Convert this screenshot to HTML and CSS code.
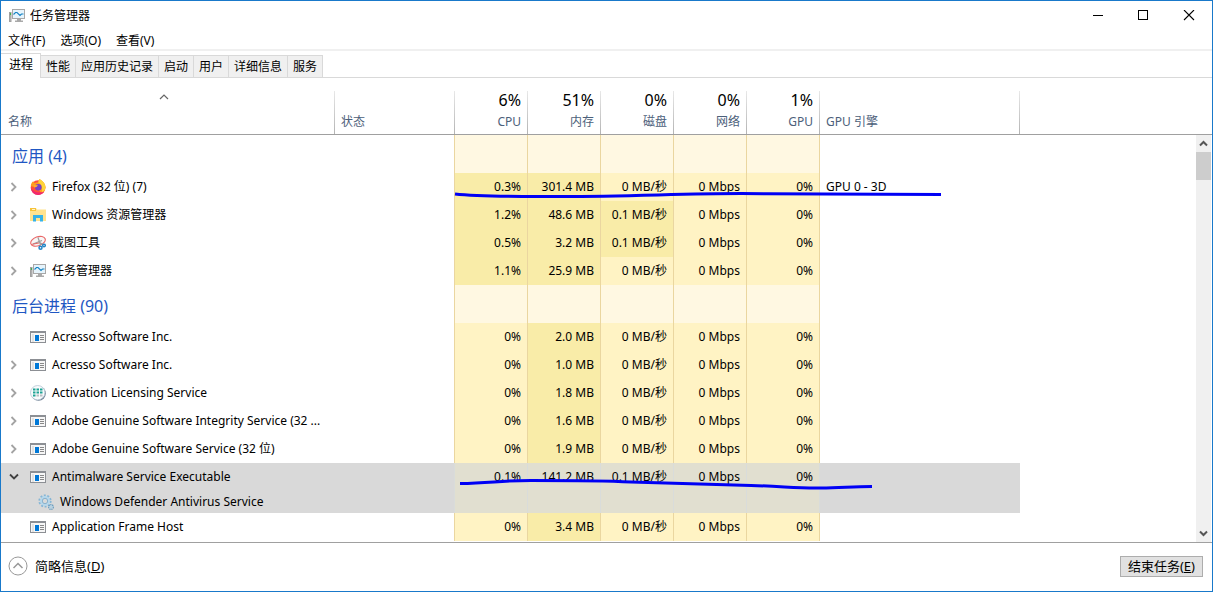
FILE: index.html
```html
<!DOCTYPE html>
<html lang="zh-CN">
<head>
<meta charset="utf-8">
<title>任务管理器</title>
<link rel="stylesheet" href="styles.css">
</head>
<body>
<svg class="defs" aria-hidden="true">
  <symbol id="monitor" viewBox="0 0 16 16">
    <rect x="0.5" y="4.500" width="1.500" height="9" fill="#b8b8b8" stroke="#a0a0a0"/>
    <rect x="1" y="5" width="1" height="2" fill="#3cb44a"/>
    <rect x="3.500" y="1.500" width="12" height="9" fill="#e6f4fc" stroke="#a8a8a8"/>
    <path d="M4.500 6.500L6.500 4.500L8 4.500L11 7.500L12.500 6L14.500 6" fill="none" stroke="#1683c4" stroke-width="1.100"/>
    <path d="M8 11h4v1.500h2V14H6v-1.500h2z" fill="#a9a9a9"/>
  </symbol>
  <symbol id="firefox" viewBox="0 0 16 16">
    <circle cx="8" cy="8.6" r="7.3" fill="#ff4f3c"/>
    <path d="M.8 7C1 4.500 2 3.300 3.200 2.200L4.200 4L8 3.300L9.500 0C12.500 2 15.500 4.500 15.500 8.500C15.500 11 14 13.500 12 14.500L7 9z" fill="#ff9d1e"/>
    <path d="M9.500 0C13.500 2.500 15.700 5 15.300 9C15 11 13.500 12.500 12 13C12.500 9 12 5.500 8.300 3.500C8.500 2 9 1 9.500 0z" fill="#ffd43a"/>
    <path d="M.8 9C1.500 13 4 15.900 8 15.900C11 15.900 13 14.700 14.300 12.500C10 14.500 4 13.500.8 9z" fill="#f0286f"/>
    <circle cx="8.300" cy="8.200" r="3.300" fill="#7542c8"/>
    <path d="M3.500 6L8 6.300L6.500 8L4.500 8.500z" fill="#ffb02a"/>
  </symbol>
  <symbol id="folder" viewBox="0 0 16 16">
    <path d="M0 1h6l1 1.500h9V14H0z" fill="#ffe38f"/>
    <path d="M0 1h6v3H0z" fill="#f6c339"/>
    <path d="M2 2h3v1H2z" fill="#fff4cf"/>
    <path d="M3 14.500V8h10v6.500h-3V11H6v3.500z" fill="#35b2e8"/>
  </symbol>
  <symbol id="snip" viewBox="0 0 16 16">
    <ellipse cx="8" cy="6.300" rx="7.600" ry="4.500" transform="rotate(-20 8 6.300)" fill="#f6f6f6" stroke="#e96767" stroke-width="1.100"/>
    <path d="M3 9L12 5.500M8 2.500L10.500 10M8 6.500L13 9.500" fill="none" stroke="#9d9d9d" stroke-width="1.200"/>
    <path d="M1 9.500L9 8" stroke="#e96767"/>
    <circle cx="10.500" cy="12.800" r="1.500" fill="none" stroke="#2285c6" stroke-width="1.500"/>
    <circle cx="14" cy="10.500" r="1.300" fill="none" stroke="#2285c6" stroke-width="1.500"/>
  </symbol>
  <symbol id="app" viewBox="0 0 16 16">
    <rect x="0.500" y="2.500" width="15" height="11" fill="#f6f6f6" stroke="#8c8f94"/>
    <rect y="2" width="16" height="2" fill="#8c8f94"/>
    <rect x="2" y="5" width="2" height="8" fill="#e2e2e2"/>
    <rect x="5" y="6" width="4" height="6" fill="#0078d7"/>
    <path d="M10 6.500h4M10 8.500h4M10 10.500h4" stroke="#888"/>
  </symbol>
  <symbol id="licence" viewBox="0 0 16 16">
    <circle cx="8.500" cy="8.500" r="7.300" fill="#6f7f92"/>
    <circle cx="7.700" cy="7.700" r="7.200" fill="#f8fbfc" stroke="#b5c6d6" stroke-width=".8"/>
    <path d="M3 4.500h2.500M6.500 4.500H9M10 4.500h2.500M3 7.500h2.500M6.500 7.500H9M10 7.500h2.500M3 10.500h2.500" stroke="#1da294" stroke-width="2"/>
    <path d="M6.500 10.500H9M10 10.500h2.500" stroke="#b9bec2" stroke-width="2"/>
  </symbol>
  <symbol id="gears" viewBox="0 0 16 16">
    <circle cx="7" cy="7" r="5.600" fill="none" stroke="#86b6d6" stroke-width="2" stroke-dasharray="2 1.500"/>
    <circle cx="7" cy="7" r="3.900" fill="#d9d9d9" stroke="#b4d7ec" stroke-width="2"/>
    <circle cx="7" cy="7" r="2.700" fill="none" stroke="#76a7c8" stroke-width=".8"/>
    <circle cx="13" cy="13" r="2.300" fill="none" stroke="#6f9fc0" stroke-width="1.500" stroke-dasharray="1.200 .6"/>
    <circle cx="13" cy="13" r="1.300" fill="none" stroke="#a9cfe5"/>
  </symbol>
  <symbol id="right" viewBox="0 0 8 10"><path d="M1.500 1L5.500 5L1.500 9" fill="none" stroke="#a3a3a3" stroke-width="1.800"/></symbol>
  <symbol id="down" viewBox="0 0 10 8"><path d="M1 1.500L5 5.500L9 1.500" fill="none" stroke="#404040" stroke-width="1.800"/></symbol>
</svg>
<div class="window">
  <header class="titlebar">
    <svg class="icon"><use href="#monitor"/></svg>
    <h1 class="title">任务管理器</h1>
    <div class="controls">
      <button type="button" aria-label="最小化"><svg viewBox="0 0 12 12"><path d="M2 5.500h10" stroke="#000"/></svg></button>
      <button type="button" aria-label="最大化"><svg viewBox="0 0 12 12"><rect x="1.500" y="0.500" width="9" height="9" fill="none" stroke="#000"/></svg></button>
      <button type="button" aria-label="关闭"><svg viewBox="0 0 12 12"><path d="M1 0L11 10M11 0L1 10" stroke="#000" stroke-width="1.100"/></svg></button>
    </div>
  </header>
  <nav class="menubar">
    <button type="button">文件(F)</button>
    <button type="button">选项(O)</button>
    <button type="button">查看(V)</button>
  </nav>
  <div class="tabs" role="tablist">
    <button type="button" role="tab" class="tab active" aria-selected="true">进程</button>
    <button type="button" role="tab" class="tab">性能</button>
    <button type="button" role="tab" class="tab">应用历史记录</button>
    <button type="button" role="tab" class="tab">启动</button>
    <button type="button" role="tab" class="tab">用户</button>
    <button type="button" role="tab" class="tab">详细信息</button>
    <button type="button" role="tab" class="tab">服务</button>
  </div>
  <table class="grid head">
    <colgroup><col class="c-name"><col class="c-status"><col class="c-num"><col class="c-num"><col class="c-num"><col class="c-num"><col class="c-num"><col class="c-engine"><col></colgroup>
    <thead>
      <tr>
        <th><div class="hcell"><svg class="sort" viewBox="0 0 10 6"><path d="M1 5L5 1L9 5" fill="none" stroke="#666" stroke-width="1.200"/></svg><span>名称</span></div></th>
        <th><div class="hcell"><span>状态</span></div></th>
        <th><div class="hcell num"><strong>6%</strong><span>CPU</span></div></th>
        <th><div class="hcell num"><strong>51%</strong><span>内存</span></div></th>
        <th><div class="hcell num"><strong>0%</strong><span>磁盘</span></div></th>
        <th><div class="hcell num"><strong>0%</strong><span>网络</span></div></th>
        <th><div class="hcell num"><strong>1%</strong><span>GPU</span></div></th>
        <th><div class="hcell"><span>GPU 引擎</span></div></th>
        <td></td>
      </tr>
    </thead>
  </table>
  <main class="body">
    <div class="list">
      <table class="grid rows">
        <colgroup><col class="c-name"><col class="c-status"><col class="c-num"><col class="c-num"><col class="c-num"><col class="c-num"><col class="c-num"><col class="c-engine"><col></colgroup>
        <tbody>
          <tr class="group"><th>应用 (4)</th><td></td><td></td><td></td><td></td><td></td><td></td><td></td><td></td></tr>
          <tr><td><div class="name"><svg class="chev"><use href="#right"/></svg><svg class="icon"><use href="#firefox"/></svg><span>Firefox (32 位) (7)</span></div></td><td></td><td class="hot">0.3%</td><td class="hot">301.4 MB</td><td>0 MB/秒</td><td>0 Mbps</td><td>0%</td><td>GPU 0 - 3D</td><td></td></tr>
          <tr><td><div class="name"><svg class="chev"><use href="#right"/></svg><svg class="icon"><use href="#folder"/></svg><span>Windows 资源管理器</span></div></td><td></td><td class="hot">1.2%</td><td class="hot">48.6 MB</td><td class="hot">0.1 MB/秒</td><td>0 Mbps</td><td>0%</td><td></td><td></td></tr>
          <tr><td><div class="name"><svg class="chev"><use href="#right"/></svg><svg class="icon"><use href="#snip"/></svg><span>截图工具</span></div></td><td></td><td class="hot">0.5%</td><td class="hot">3.2 MB</td><td class="hot">0.1 MB/秒</td><td>0 Mbps</td><td>0%</td><td></td><td></td></tr>
          <tr><td><div class="name"><svg class="chev"><use href="#right"/></svg><svg class="icon"><use href="#monitor"/></svg><span>任务管理器</span></div></td><td></td><td class="hot">1.1%</td><td class="hot">25.9 MB</td><td>0 MB/秒</td><td>0 Mbps</td><td>0%</td><td></td><td></td></tr>
          <tr class="group"><th>后台进程 (90)</th><td></td><td></td><td></td><td></td><td></td><td></td><td></td><td></td></tr>
          <tr><td><div class="name"><svg class="chev"></svg><svg class="icon"><use href="#app"/></svg><span>Acresso Software Inc.</span></div></td><td></td><td>0%</td><td class="hot">2.0 MB</td><td>0 MB/秒</td><td>0 Mbps</td><td>0%</td><td></td><td></td></tr>
          <tr><td><div class="name"><svg class="chev"><use href="#right"/></svg><svg class="icon"><use href="#app"/></svg><span>Acresso Software Inc.</span></div></td><td></td><td>0%</td><td class="hot">1.0 MB</td><td>0 MB/秒</td><td>0 Mbps</td><td>0%</td><td></td><td></td></tr>
          <tr><td><div class="name"><svg class="chev"><use href="#right"/></svg><svg class="icon"><use href="#licence"/></svg><span>Activation Licensing Service</span></div></td><td></td><td>0%</td><td class="hot">1.8 MB</td><td>0 MB/秒</td><td>0 Mbps</td><td>0%</td><td></td><td></td></tr>
          <tr><td><div class="name"><svg class="chev"><use href="#right"/></svg><svg class="icon"><use href="#app"/></svg><span>Adobe Genuine Software Integrity Service (32 ...</span></div></td><td></td><td>0%</td><td class="hot">1.6 MB</td><td>0 MB/秒</td><td>0 Mbps</td><td>0%</td><td></td><td></td></tr>
          <tr><td><div class="name"><svg class="chev"><use href="#right"/></svg><svg class="icon"><use href="#app"/></svg><span>Adobe Genuine Software Service (32 位)</span></div></td><td></td><td>0%</td><td class="hot">1.9 MB</td><td>0 MB/秒</td><td>0 Mbps</td><td>0%</td><td></td><td></td></tr>
          <tr class="selected"><td><div class="name"><svg class="chev open"><use href="#down"/></svg><svg class="icon"><use href="#app"/></svg><span>Antimalware Service Executable</span></div></td><td></td><td>0.1%</td><td>141.2 MB</td><td>0.1 MB/秒</td><td>0 Mbps</td><td>0%</td><td></td><td></td></tr>
          <tr class="selected child"><td><div class="name"><svg class="icon"><use href="#gears"/></svg><span>Windows Defender Antivirus Service</span></div></td><td></td><td></td><td></td><td></td><td></td><td></td><td></td><td></td></tr>
          <tr><td><div class="name"><svg class="chev"></svg><svg class="icon"><use href="#app"/></svg><span>Application Frame Host</span></div></td><td></td><td>0%</td><td class="hot">3.4 MB</td><td>0 MB/秒</td><td>0 Mbps</td><td>0%</td><td></td><td></td></tr>
        </tbody>
      </table>
      <svg class="pen" viewBox="0 0 500 360" aria-hidden="true">
        <path d="M4 14C30 17 60 16.500 110 16.500C180 16.500 230 13.500 290 13.500C340 14 370 14.500 490 14.500"/>
        <path d="M9 303.500C40 303 50 300.500 80 300.500C120 300.500 150 300.500 180 302C220 303 260 304 300 305.500C330 306 345 308.500 370 308C390 308 400 306.500 421 306.500"/>
      </svg>
    </div>
    <div class="scrollbar">
      <button type="button" aria-label="向上滚动"><svg viewBox="0 0 9 7"><path d="M1 5.500L4.500 2L8 5.500" fill="none" stroke="#555" stroke-width="2"/></svg></button>
      <div class="thumb"></div>
      <button type="button" aria-label="向下滚动"><svg viewBox="0 0 9 7"><path d="M1 1.500L4.500 5L8 1.500" fill="none" stroke="#555" stroke-width="2"/></svg></button>
    </div>
  </main>
  <footer class="footer">
    <button type="button" class="less"><svg viewBox="0 0 20 20"><circle cx="10" cy="10" r="9" fill="none" stroke="#999"/><path d="M5.500 12L10 7.500L14.500 12" fill="none" stroke="#999" stroke-width="1.500"/></svg><span>简略信息(<u>D</u>)</span></button>
    <button type="button" class="end">结束任务(<u>E</u>)</button>
  </footer>
</div>
</body>
</html>
```
FILE: styles.css
```css
* { box-sizing: border-box; }
body {
  margin: 0;
  font: 12px/16px "Noto Sans", "Noto Sans CJK SC", sans-serif;
  color: #000;
}
button {
  font: inherit;
  color: inherit;
  background: none;
  border: 0;
  padding: 0;
}
.defs { position: absolute; width: 0; height: 0; }
.icon { width: 16px; height: 16px; flex: none; }
.window {
  display: flex;
  flex-direction: column;
  height: 100vh;
  background: #fff;
  border: 1px solid #1979ca;
}
.titlebar { display: flex; align-items: center; height: 30px; padding-left: 8px; }
.title { margin: 0 0 0 5px; font-size: 12px; font-weight: 400; }
.controls { display: flex; margin-left: auto; }
.controls button { display: flex; align-items: center; justify-content: center; width: 46px; height: 28px; }
.controls svg { width: 12px; height: 12px; }
.menubar {
  display: flex;
  align-items: center;
  gap: 15px;
  height: 20px;
  padding: 2px 0 0 7px;
  border-bottom: 2px solid #f0f0f0;
}
.tabs {
  display: flex;
  align-items: flex-end;
  height: 27px;
  border-bottom: 1px solid #d9d9d9;
}
.tab {
  height: 22px;
  padding: 1px 5px 0;
  background: #f0f0f0;
  border: solid #d9d9d9;
  border-width: 1px 1px 0 0;
}
.tab.active {
  height: 25px;
  margin-bottom: -1px;
  padding: 0 7px 2px 8px;
  background: #fff;
}
.grid { width: 100%; table-layout: fixed; border-collapse: separate; border-spacing: 0; }
.grid th, .grid td { padding: 0; font-weight: 400; text-align: left; }
.c-name { width: 334px; }
.c-status { width: 120px; }
.c-num { width: 73px; }
.c-engine { width: 200px; }
.head { border-bottom: 1px solid #a0a0a0; }
.head th { padding-top: 13px; }
.hcell {
  display: flex;
  flex-direction: column;
  justify-content: flex-end;
  height: 43px;
  padding: 0 7px 4px 6px;
  color: #4c607a;
  background: linear-gradient(#e8e8e8, #b4b4b4) right / 1px 100% no-repeat;
}
.head th:first-child .hcell { padding-left: 7px; }
.hcell.num { align-items: flex-end; }
.hcell strong { margin-bottom: 3px; font-size: 16px; line-height: 22px; font-weight: 400; color: #000; }
.sort { width: 10px; height: 6px; margin: 0 auto 14px 151px; }
.body { display: flex; flex: 1; min-height: 0; border-bottom: 1px solid #a0a0a0; }
.list { position: relative; flex: 1; overflow: hidden; }
.rows tr { height: 28px; }
.rows .group { height: 38px; }
.rows .child { height: 22px; }
.rows .group th { padding: 4px 0 0 11px; font-size: 16px; line-height: 20px; color: #1f57c3; }
.rows td:nth-child(n+3):nth-child(-n+7) {
  padding-right: 6px;
  text-align: right;
  background: #fff3c4;
  border-right: 1px solid #ead6a0;
}
.rows td:nth-child(2) { border-right: 1px solid #ead6a0; }
.rows td:nth-child(8) { padding-left: 6px; }
.rows .hot:nth-child(n+3):nth-child(-n+7) { background: #f9eca8; }
.rows .group td:nth-child(n+3):nth-child(-n+7) { background: #fff8e2; }
.rows .selected td:nth-child(-n+8) { background: #d9d9d9; }
.rows .selected td:nth-child(n+3):nth-child(-n+7) { background: #e1dfd0; }
.rows .selected td:nth-child(n+2):nth-child(-n+7) { border-right-color: #d9dcda; }
.name { display: flex; align-items: center; padding-left: 9px; white-space: nowrap; }
.name span { margin-left: 6px; }
.chev { width: 8px; height: 10px; flex: none; margin-right: 12px; }
.chev.open { width: 10px; height: 8px; margin: 0 11px 0 -1px; }
.child .name { padding-left: 37px; }
.pen { position: absolute; left: 450px; top: 45px; width: 500px; height: 360px; pointer-events: none; }
.pen path { fill: none; stroke: #0000f5; stroke-width: 3; }
.scrollbar { display: flex; flex-direction: column; width: 15px; margin-right: 1px; background: #f0f0f0; }
.scrollbar button { display: flex; align-items: center; justify-content: center; height: 17px; }
.scrollbar button:last-child { margin-top: auto; }
.scrollbar svg { width: 9px; height: 7px; }
.thumb { height: 28px; background: #cdcdcd; }
.footer {
  display: flex;
  align-items: center;
  justify-content: space-between;
  height: 48px;
  padding: 0 9px 2px 7px;
  font-size: 13px;
}
.less { display: flex; align-items: center; gap: 7px; }
.less svg { width: 20px; height: 20px; }
.end { height: 21px; padding: 0 7px; line-height: 18px; background: #e1e1e1; border: 1px solid #adadad; }
```
